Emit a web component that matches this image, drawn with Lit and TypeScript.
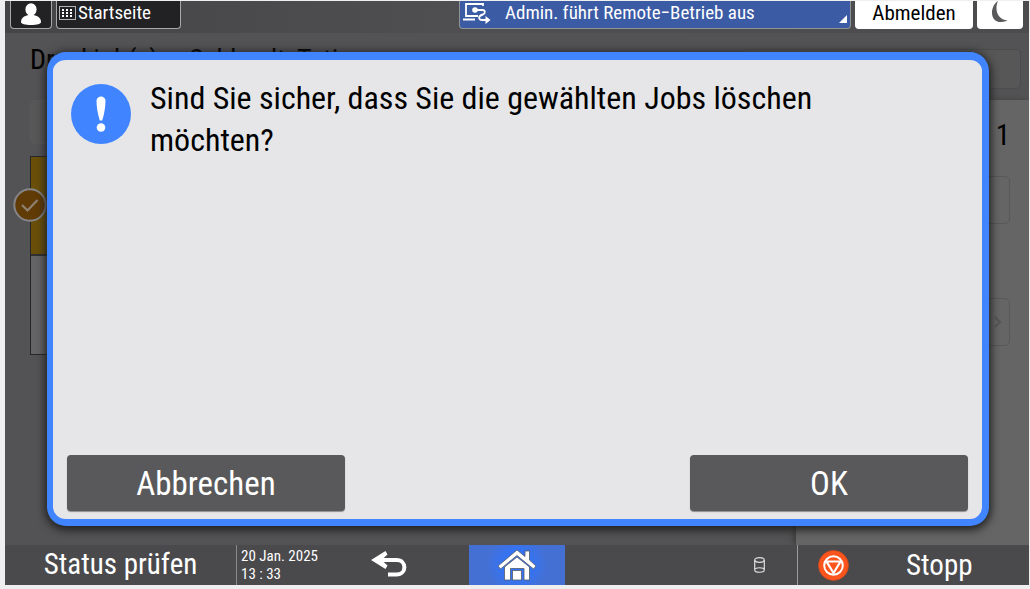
import { LitElement, html, css } from "lit";

class AppRoot extends LitElement {
  static styles = css`
    :host {
      display: block;
      box-sizing: border-box;
      min-height: 100vh;
      padding: 1px 1px 4px 5px;
      background: #efefef;
      font-family: "Roboto Condensed", "Open Sans Condensed", "Noto Sans", sans-serif;
    }
    * {
      box-sizing: border-box;
    }
    button,
    a {
      font: inherit;
      color: inherit;
      text-decoration: none;
      margin: 0;
      padding: 0;
      border: 0;
      background: none;
      display: flex;
      align-items: center;
      white-space: nowrap;
    }
    svg {
      display: block;
      flex: none;
    }
    h1,
    h2,
    p {
      margin: 0;
      font-weight: 400;
    }
    .screen {
      position: relative;
      display: flex;
      flex-direction: column;
      min-height: calc(100vh - 5px);
      overflow: hidden;
      background: #535355;
    }

    .topbar {
      display: flex;
      gap: 4px;
      height: 32px;
      padding: 0 6px 4px 5px;
      background: linear-gradient(90deg, #454548, #4f4f51 45%, #4c4c4e);
      font-size: 19px;
      line-height: 24px;
    }
    .topbar > * {
      border: 1px solid #a8a8a8;
      border-top: 0;
      border-radius: 0 0 4px 4px;
    }
    .user {
      width: 42px;
      justify-content: center;
      background: #222224;
    }
    .start {
      width: 125px;
      gap: 2px;
      padding: 0 0 3px 2px;
      background: #222224;
      color: #fff;
    }
    .remote {
      position: relative;
      width: 392px;
      margin-left: auto;
      gap: 14px;
      padding: 0 0 3px 3px;
      background: #3b5ba5;
      border-color: #8f9399;
      color: #fff;
    }
    .corner {
      position: absolute;
      right: 3px;
      bottom: 5px;
    }
    .topbar > .logout {
      width: 118px;
      justify-content: center;
      padding-bottom: 4px;
      background: #fff;
      border-color: #fff;
      font-size: 21px;
    }
    .topbar > .sleep {
      width: 46px;
      justify-content: center;
      padding-bottom: 5px;
      background: #fff;
      border-color: #fff;
    }

    .main {
      flex: 1;
      display: grid;
      grid-template-columns: minmax(0, 1fr) 233px;
      grid-template-rows: 67px 1fr;
    }
    .head {
      grid-column: 1 / -1;
      display: flex;
      justify-content: space-between;
      padding: 9px 8px 12px 25px;
    }
    .head h1 {
      font-size: 28px;
      line-height: 36px;
      white-space: nowrap;
    }
    .ghost {
      border: 1px solid #4c4c4d;
      border-radius: 5px;
      background: #575757;
    }
    .head .ghost {
      width: 280px;
      height: 40px;
      margin-top: 7px;
    }
    .list {
      padding: 0 0 0 25px;
    }
    .filter {
      width: 300px;
      height: 44px;
      margin-bottom: 12px;
      border-color: #5a5a5c;
    }
    .rows {
      border: 1px solid #262626;
    }
    .row {
      position: relative;
      height: 98px;
      background: #646466;
    }
    .row.picked {
      height: 99px;
      background: #694f09;
      border-bottom: 2px solid #303030;
    }
    .check {
      position: absolute;
      left: -18px;
      top: 31px;
    }
    .side {
      display: flex;
      flex-direction: column;
      padding: 18px 19px 0 20px;
      background: #656565;
      box-shadow: -3px 0 5px #404040;
    }
    .count {
      font-size: 29px;
      line-height: 34px;
      text-align: right;
    }
    .side .ghost {
      height: 48px;
      margin-top: 24px;
      justify-content: flex-end;
      padding-right: 7px;
      background: #656565;
      border-color: #585858;
    }
    .side .ghost + .ghost {
      margin-top: 74px;
    }

    .bottom {
      display: grid;
      grid-template-columns: 232px 1fr 96px 1fr 232px;
      height: 40px;
      background: #4a4a4d;
      color: #fff;
      font-size: 29px;
    }
    .status {
      justify-content: center;
      padding-bottom: 2px;
      border-right: 1px solid #8a8a8a;
    }
    .mid {
      display: flex;
      align-items: center;
      justify-content: space-between;
      padding: 0 32px 0 4px;
    }
    time {
      font-size: 15px;
      line-height: 18px;
    }
    .mid.store {
      justify-content: flex-end;
    }
    .home {
      justify-content: center;
      background: radial-gradient(circle at center, #2f74ff 15%, #4470d4 58%);
    }
    .stop {
      gap: 57px;
      padding: 0 0 0 20px;
      border-left: 1px solid #9a9a9a;
    }

    .dialog {
      position: absolute;
      inset: 51px 40px 59px 42px;
      display: flex;
      flex-direction: column;
      justify-content: space-between;
      padding: 17px 14px 8px;
      border: 7px solid #4085ff;
      border-top-width: 8px;
      border-left-width: 6px;
      border-radius: 19px;
      background: #e6e6e8;
      box-shadow: 0 2px 8px 2px #202020;
    }
    .message {
      display: flex;
      gap: 19px;
      padding: 0 120px 0 4px;
    }
    .message svg {
      margin-top: 7px;
    }
    .message h2 {
      font-size: 32px;
      line-height: 42px;
    }
    .actions {
      display: flex;
      justify-content: space-between;
    }
    .actions button {
      width: 278px;
      height: 56px;
      justify-content: center;
      border-radius: 4px;
      background: #59595b;
      box-shadow: 0 1px 1px #8c8c8c;
      color: #fff;
      font-size: 33px;
    }
  `;

  render() {
    return html`
      <div class="screen">
        <header class="topbar">
          <button class="user" aria-label="Benutzer">
            <svg width="22" height="24" viewBox="0 0 22 24" fill="#fff">
              <ellipse cx="11" cy="6.500" rx="5.600" ry="6.200" />
              <path d="M1 19c0-4.500 4-6.500 8-7h4c4 .5 8 2.500 8 7 0 2-4 3-10 3S1 21 1 19z" />
            </svg>
          </button>
          <button class="start">
            <svg width="17" height="14" viewBox="0 0 17 14" fill="#fff">
              <rect x=".5" y=".5" width="16" height="13" fill="none" stroke="#b5b5b5" />
              <path d="M3 3h2v2H3zM7 3h2v2H7zM11 3h2v2h-2zM3 6h2v2H3zM7 6h2v2H7zM11 6h2v2h-2zM3 9h2v2H3zM7 9h2v2H7zM11 9h2v2h-2z" />
            </svg>
            Startseite
          </button>
          <button class="remote">
            <svg width="28" height="22" viewBox="0 0 28 22" fill="none" stroke="#fff" stroke-width="1.800">
              <path d="M15 14H3V2h17v2M0 17.500h12" />
              <path d="M13 8h6.500c3 0 3 3.500.5 4.500-5 1-5 5.500-1 5.500h5" />
              <circle cx="12" cy="8" r="2.800" fill="#fff" stroke="none" />
              <path d="M22.500 14l5 4-5 4z" fill="#fff" stroke="none" />
            </svg>
            Admin. führt Remote−Betrieb aus
            <svg class="corner" width="8" height="8" viewBox="0 0 8 8"><path d="M8 0v8H0z" fill="#fff" /></svg>
          </button>
          <button class="logout">Abmelden</button>
          <button class="sleep" aria-label="Energiesparmodus">
            <svg width="18" height="22" viewBox="0 0 18 22">
              <path d="M7 0C-1 5-2 21 10 21c3 0 5-.8 6.500-1.500C7 19 3 9 7 0z" fill="#59595b" />
            </svg>
          </button>
        </header>

        <main class="main">
          <div class="head">
            <h1>Druckjob(s) v. Schlandt, Tati</h1>
            <button class="ghost" aria-label="Sortieren"></button>
          </div>
          <section class="list">
            <button class="ghost filter" aria-label="Filter"></button>
            <div class="rows">
              <div class="row picked">
                <svg class="check" width="34" height="34" viewBox="0 0 34 34">
                  <circle cx="17" cy="17" r="15.700" fill="#613b06" stroke="#858587" stroke-width="2" />
                  <path d="M9 17l5.500 5.500L24.500 12" fill="none" stroke="#8f8172" stroke-width="2.200" />
                </svg>
              </div>
              <div class="row"></div>
            </div>
          </section>
          <aside class="side">
            <p class="count">1</p>
            <button class="ghost" aria-label="Auswahl"></button>
            <button class="ghost" aria-label="Weiter">
              <svg width="8" height="14" viewBox="0 0 8 14" fill="none" stroke="#565656" stroke-width="2">
                <path d="M1 2l5 5-5 5" />
              </svg>
            </button>
          </aside>
        </main>

        <footer class="bottom">
          <button class="status">Status prüfen</button>
          <div class="mid">
            <time datetime="2025-01-20T13:33">20 Jan. 2025<br />13 : 33</time>
            <button aria-label="Zurück">
              <svg width="66" height="30" viewBox="0 0 66 30">
                <path d="M9 10h16.500c10.500 0 10.500 14.500 0 14.500H17" fill="none" stroke="#fff" stroke-width="4" />
                <path d="M0 10L14.500 1l2 3.500L10.500 10l6 5.500-2 3.500z" fill="#fff" />
              </svg>
            </button>
          </div>
          <button class="home" aria-label="Startseite">
            <svg width="38" height="32" viewBox="0 0 38 32" fill="#fff" stroke="#555b66" stroke-width=".8">
              <path d="M6.500 18L19 8l12.500 10v13H26V19.500H12.500V31h-6z" />
              <path d="M14.500 21.500h9V31h-9z" />
              <path d="M0 17L19 1l8 6.500V2h4.500v9L38 17l-2.500 3L19 6.500 2.500 20z" />
            </svg>
          </button>
          <div class="mid store">
            <svg width="11" height="16" viewBox="0 0 11 16" fill="none" stroke="#ddd" stroke-width="1.200">
              <ellipse cx="5.500" cy="3" rx="4.800" ry="2.300" />
              <path d="M.7 3v10c0 3 9.600 3 9.600 0V3M.7 13c0-3 9.600-3 9.600 0" />
            </svg>
          </div>
          <button class="stop">
            <svg width="31" height="31" viewBox="0 0 31 31" fill="none" stroke="#fff">
              <circle cx="15.500" cy="15.500" r="15" fill="#fc541d" stroke="#c94a20" stroke-width=".8" />
              <circle cx="15.500" cy="15.500" r="9.300" stroke-width="2" />
              <path d="M8.500 11.500h14L15.500 23z" stroke-width="2.200" />
            </svg>
            Stopp
          </button>
        </footer>

        <section class="dialog" role="alertdialog" aria-labelledby="question">
          <div class="message">
            <svg width="60" height="60" viewBox="0 0 60 60">
              <circle cx="30" cy="30" r="30" fill="#4085ff" />
              <path d="M25.500 17c0-6 9-6 9 0 0 6-1.500 14-3.300 19.500h-2.400C27 31 25.500 23 25.500 17z" fill="#fff" />
              <circle cx="30" cy="43.500" r="4.300" fill="#fff" />
            </svg>
            <h2 id="question">Sind Sie sicher, dass Sie die gewählten Jobs löschen möchten?</h2>
          </div>
          <div class="actions">
            <button>Abbrechen</button>
            <button>OK</button>
          </div>
        </section>
      </div>
    `;
  }
}
customElements.define("app-root", AppRoot);
